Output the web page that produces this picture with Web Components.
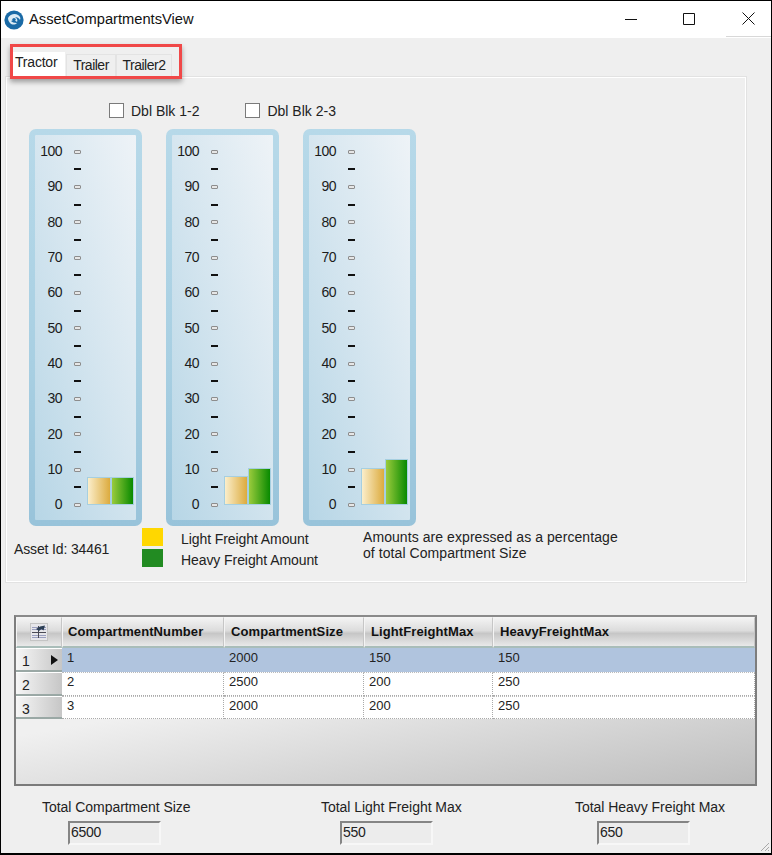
<!DOCTYPE html>
<html>
<head>
<meta charset="utf-8">
<title>AssetCompartmentsView</title>
<style>
    html, body { margin: 0; padding: 0; background: #efefef; }
    body { font-family: "Liberation Sans", Arial, sans-serif; font-size: 14px; color: #222; }
</style>
</head>
<body>
<asset-window>
    <title-bar slot="title">AssetCompartmentsView</title-bar>
    <tab-strip>
        <button-row slot="checks">
            <check-box style="margin-left:74px">Dbl Blk 1-2</check-box>
            <check-box style="margin-left:46px">Dbl Blk 2-3</check-box>
        </button-row>
        <tank-gauge slot="gauges" light="28" heavy="28"></tank-gauge>
        <tank-gauge slot="gauges" light="29" heavy="37"></tank-gauge>
        <tank-gauge slot="gauges" light="37" heavy="46"></tank-gauge>
        <freight-legend slot="footer"></freight-legend>
    </tab-strip>
    <compartment-grid></compartment-grid>
    <total-row>
        <total-field label="Total Compartment Size" value="6500" style="width:148px" offset="26"></total-field>
        <total-field label="Total Light Freight Max" value="550" style="width:142px;margin-left:131px" offset="19"></total-field>
        <total-field label="Total Heavy Freight Max" value="650" style="width:152px;margin-left:112px" offset="22"></total-field>
    </total-row>
</asset-window>

<script>
    window.customElements.define('asset-window',
    class AssetWindow extends HTMLElement {
        constructor() {
            super()
            this.attachShadow({mode: 'open'})
            this.shadowRoot.innerHTML = `
                <style>
                    :host {
                        display: flex;
                        flex-direction: column;
                        box-sizing: border-box;
                        width: 772px;
                        height: 855px;
                        border: 1px solid #000;
                        border-bottom-width: 2px;
                        background: #efefef;
                        position: relative;
                        overflow: hidden;
                    }
                    .grip { position: absolute; right: 1px; bottom: 1px; }
                </style>
                <slot name="title"></slot>
                <slot></slot>
                <svg class="grip" width="12" height="12" viewBox="0 0 12 12">
                    <path d="M11 3 3 11M11 7 7 11M11 10 10 11" stroke="#a8a8a8" stroke-width="1" fill="none"/>
                </svg>`
        }
    })

    window.customElements.define('title-bar',
    class TitleBar extends HTMLElement {
        constructor() {
            super()
            this.attachShadow({mode: 'open'})
            this.shadowRoot.innerHTML = `
                <style>
                    :host {
                        display: flex;
                        align-items: center;
                        height: 37px;
                        background: #fff;
                        flex: none;
                    }
                    .logo { margin-left: 3px; margin-right: 5px; }
                    .name { font-size: 14.7px; color: #111; flex: 1; margin-top: -1px; }
                    .btn { width: 46px; height: 37px; margin-left: 12px; display: flex; align-items: center; justify-content: center; margin-top: -2px; }
                    .btn:last-child { width: 45px; height: 36px; margin-left: 14px; margin-top: -1px; padding-bottom: 1px; box-sizing: border-box; border-bottom: 1px solid #d8d8d8; }
                </style>
                <svg class="logo" width="20" height="20" viewBox="0 0 20 20">
                    <circle cx="10" cy="10" r="9.6" fill="#1a6aa6"/>
                    <path d="M4 8c2-4 7-5 10-3 2 1 3 3 2 5-1-2-3-3-5-3 2 1 3 3 2 5-2-2-4-2-6-1 1 1 3 2 6 2-2 2-5 2-7 0-1-1-2-3-2-5z" fill="#dcebf5"/>
                    <circle cx="10" cy="9.6" r="1.7" fill="#1a6aa6"/>
                </svg>
                <div class="name"><slot></slot></div>
                <div class="btn"><svg width="12" height="12"><path d="M0 6.5h12" stroke="#111"/></svg></div>
                <div class="btn"><svg width="12" height="12"><path d="M.5.5h11v11H.5z" stroke="#111" fill="none"/></svg></div>
                <div class="btn"><svg width="13" height="13"><path d="M.5.5l12 12M12.5.5l-12 12" stroke="#111" fill="none"/></svg></div>`
        }
    })

    window.customElements.define('tab-strip',
    class TabStrip extends HTMLElement {
        constructor() {
            super()
            this.attachShadow({mode: 'open'})
            this.shadowRoot.innerHTML = `
                <style>
                    :host {
                        display: block;
                        margin: 12px 24px 0 4px;
                        position: relative;
                    }
                    .tabs { display: flex; align-items: flex-end; height: 26px; padding-left: 8px; }
                    .tab {
                        box-sizing: border-box;
                        height: 22px;
                        font-size: 14px;
                        letter-spacing: -.5px;
                        line-height: 21px;
                        text-align: center;
                        background: #efefef;
                        border: 1px solid #e3e3e3;
                        border-bottom: 0;
                    }
                    .tab.on {
                        height: 24px;
                        letter-spacing: -.2px;
                        line-height: 19px;
                        width: 52px;
                        text-align: left;
                        padding-left: 1px;
                        background: #fff;
                        border-color: #fff;
                        margin-right: 1px;
                    }
                    .panel {
                        box-sizing: border-box;
                        height: 507px;
                        border: 1px solid #e2e2e2;
                        box-shadow: inset 0 0 0 1px #fff;
                        padding: 26px 0 0 8px;
                    }
                    .gauges { display: flex; gap: 24px; margin: 1px 0 0 15px; }
                    .highlight {
                        position: absolute;
                        left: 5px;
                        top: -6px;
                        width: 172px;
                        height: 35px;
                        box-sizing: border-box;
                        border: 3px solid #f04848;
                        box-shadow: 0 3px 5px rgba(0,0,0,.35);
                    }
                </style>
                <div class="tabs">
                    <div class="tab on">Tractor</div>
                    <div class="tab" style="width:50px">Trailer</div>
                    <div class="tab" style="width:56px">Trailer2</div>
                </div>
                <div class="panel">
                    <slot name="checks"></slot>
                    <div class="gauges"><slot name="gauges"></slot></div>
                    <slot name="footer"></slot>
                </div>
                <div class="highlight"></div>`
        }
    })

    window.customElements.define('button-row',
    class ButtonRow extends HTMLElement {
        constructor() {
            super()
            this.attachShadow({mode: 'open'})
            this.shadowRoot.innerHTML = `
                <style>
                    :host { display: flex; height: 25px; margin-left: 21px; }
                </style>
                <slot></slot>`
        }
    })

    window.customElements.define('check-box',
    class CheckBox extends HTMLElement {
        constructor() {
            super()
            this.attachShadow({mode: 'open'})
            this.shadowRoot.innerHTML = `
                <style>
                    :host { display: flex; align-items: center; gap: 7px; height: 15px; }
                    .box {
                        box-sizing: border-box;
                        width: 15px;
                        height: 15px;
                        background: #fff;
                        border: 1px solid #7a7a7a;
                    }
                </style>
                <div class="box"></div><slot></slot>`
        }
    })

    window.customElements.define('tank-gauge',
    class TankGauge extends HTMLElement {
        constructor() {
            super()
            this.attachShadow({mode: 'open'})
            let rows = ''
            for (let i = 100; i >= 0; i -= 5) {
                const major = i % 10 === 0
                rows += `<div class="num">${major ? i : ''}</div><div class="tick"><i class="${major ? 'major' : 'minor'}"></i></div>`
            }
            this.shadowRoot.innerHTML = `
                <style>
                    :host {
                        display: block;
                        box-sizing: border-box;
                        width: 113px;
                        height: 397px;
                        border: 6px solid transparent;
                        border-radius: 7px;
                        background:
                            linear-gradient(73deg, #b7d6e6 0%, #d4e5ef 50%, #eef3f7 100%) padding-box,
                            linear-gradient(#b7d9e9, #a8cfe2 60%, #98c3da) border-box;
                    }
                    .inner { display: flex; align-items: flex-end; height: 100%; }
                    .scale {
                        display: grid;
                        grid-template-columns: 27px 12px;
                        grid-auto-rows: 17.68px;
                        column-gap: 12px;
                        margin: 0 0 6px 0;
                        width: 51px;
                        flex: none;
                    }
                    .num { letter-spacing: -.5px; line-height: 17.68px; text-align: right; color: #1c1c1c; white-space: nowrap; }
                    .tick { display: flex; align-items: center; }
                    .minor { display: block; width: 7px; height: 2px; background: #111; }
                    .major { display: block; box-sizing: border-box; width: 7px; height: 4px; background: #e6e6e6; border: 1px solid #8d8d8d; border-radius: 1px; }
                    .bars {
                        display: flex;
                        align-items: flex-end;
                        margin: 0 0 15px 1px;
                        height: 50px;
                    }
                    .bar { box-sizing: border-box; width: 23.5px; border: 1px solid #a6cfe0; }
                    .light { background: linear-gradient(90deg, #fbeecb, #dcab3e); }
                    .heavy { background: linear-gradient(90deg, #9acb3c, #088a00); }
                </style>
                <div class="inner">
                    <div class="scale">${rows}</div>
                    <div class="bars">
                        <div class="bar light" style="height:${this.getAttribute('light')}px"></div>
                        <div class="bar heavy" style="height:${this.getAttribute('heavy')}px"></div>
                    </div>
                </div>`
        }
    })

    window.customElements.define('freight-legend',
    class FreightLegend extends HTMLElement {
        constructor() {
            super()
            this.attachShadow({mode: 'open'})
            this.shadowRoot.innerHTML = `
                <style>
                    :host { display: flex; margin-top: 2px; margin-left: -1px; padding-left: 1px; }
                    .asset { width: 128px; flex: none; padding-top: 13px; line-height: 16px; letter-spacing: -.14px; }
                    .keys {
                        width: 221px;
                        flex: none;
                        display: grid;
                        grid-template-columns: 21px auto;
                        grid-auto-rows: 18px;
                        row-gap: 3px;
                        column-gap: 18px;
                        justify-content: start;
                    }
                    .swatch { background: #ffd700; }
                    .swatch.g { background: #228b22; }
                    .lbl { letter-spacing: -.08px; line-height: 18px; padding-top: 2px; white-space: nowrap; }
                    .note { letter-spacing: .07px; line-height: 16px; margin-top: 1px; }
                </style>
                <div class="asset">Asset Id: 34461</div>
                <div class="keys">
                    <div class="swatch"></div><div class="lbl">Light Freight Amount</div>
                    <div class="swatch g"></div><div class="lbl">Heavy Freight Amount</div>
                </div>
                <div class="note">Amounts are expressed as a percentage<br>of total Compartment Size</div>`
        }
    })

    window.customElements.define('compartment-grid',
    class CompartmentGrid extends HTMLElement {
        constructor() {
            super()
            this.attachShadow({mode: 'open'})
            const cols = ['CompartmentNumber', 'CompartmentSize', 'LightFreightMax', 'HeavyFreightMax']
            const data = [[1, 2000, 150, 150], [2, 2500, 200, 250], [3, 2000, 200, 250]]
            const head = cols.map((c, i) => `<div class="hd"${i === 0 ? ' style="padding-left:5px"' : ''}>${c}</div>`).join('')
            const body = data.map((r, i) => `
                <div class="rh">${i + 1}${i === 0 ? '<span class="arrow"></span>' : ''}</div>
                ${r.map(v => `<div class="cell${i === 0 ? ' sel' : ''}">${v}</div>`).join('')}`).join('')
            this.shadowRoot.innerHTML = `
                <style>
                    :host {
                        display: block;
                        box-sizing: border-box;
                        width: 743px;
                        height: 171px;
                        margin: 32px 0 0 13px;
                        border: 2px solid #7d7d7d;
                        border-top-color: #8a8a8a;
                        border-bottom-color: #7a7a7a;
                        background: linear-gradient(170deg, #f0f0f0 40%, #bdbdbd 100%);
                        flex: none;
                    }
                    .table {
                        display: grid;
                        grid-template-columns: 46px 162px 140px 129px 1fr;
                        grid-template-rows: 31px 24px 24px 23px;
                    }
                    .hd, .corner {
                        box-sizing: border-box;
                        background: linear-gradient(#f3f3f3, #dcdcdc 45%, #c6c6c6 55%, #e9e9e9);
                        border: 1px solid #f4f4f4;
                        border-right-color: #c6c6c6;
                        border-bottom: 2px solid #a9bdb9;
                        font: bold 13px/28px "Liberation Sans", Arial, sans-serif;
                        color: #111;
                        padding-left: 6px;
                        letter-spacing: .1px;
                    }
                    .corner { padding: 0; display: flex; align-items: center; justify-content: center; }
                    .rh {
                        box-sizing: border-box;
                        position: relative;
                        background: linear-gradient(90deg, #f6f6f6, #c6c6c6);
                        border-top: 1px solid #fff;
                        border-bottom: 2px solid #9aa8a5;
                        font-size: 14px;
                        line-height: 24px;
                        padding-left: 6px;
                        color: #222;
                    }
                    .arrow {
                        position: absolute;
                        right: 4px;
                        top: 6px;
                        border-left: 7px solid #111;
                        border-top: 5px solid transparent;
                        border-bottom: 5px solid transparent;
                    }
                    .cell {
                        box-sizing: border-box;
                        background: #fff;
                        border-right: 1px dotted #aaa;
                        border-bottom: 1px dotted #aaa;
                        border-top: 1px dotted #bbb;
                        font-size: 13px;
                        line-height: 18px;
                        padding-left: 5px;
                        color: #222;
                    }
                    .cell.sel { background: #b0c4de; border-color: #b0c4de; }
                </style>
                <div class="table">
                    <div class="corner">
                        <svg width="18" height="18" viewBox="0 0 18 18">
                            <rect x=".5" y=".5" width="17" height="17" fill="#e6e6ea" stroke="#c4c4c4"/>
                            <path d="M2 4.5h14M2 6.5h14M2 12.5h14M2 14.5h14" stroke="#9a9fc0" fill="none"/>
                            <path d="M2 9.5h14M8.5 3v12" stroke="#4a4a55" fill="none"/>
                            <path d="M6 6l4-2.5 5-1-1.500 5-2-1.500-2.500 2z" fill="#2c3f55"/>
                        </svg>
                    </div>
                    ${head}${body}
                </div>`
        }
    })

    window.customElements.define('total-row',
    class TotalRow extends HTMLElement {
        constructor() {
            super()
            this.attachShadow({mode: 'open'})
            this.shadowRoot.innerHTML = `
                <style>
                    :host { display: flex; margin: 13px 0 0 41px; }
                </style>
                <slot></slot>`
        }
    })

    window.customElements.define('total-field',
    class TotalField extends HTMLElement {
        constructor() {
            super()
            this.attachShadow({mode: 'open'})
            this.shadowRoot.innerHTML = `
                <style>
                    :host { display: block; flex: none; }
                    .label { letter-spacing: -.04px; line-height: 16px; white-space: nowrap; }
                    .box {
                        box-sizing: border-box;
                        width: 93px;
                        height: 24px;
                        margin: 6px 0 0 ${this.getAttribute('offset')}px;
                        border: 2px solid #f7f7f7;
                        border-top-color: #858585;
                        border-left-color: #858585;
                        background: #ececec;
                        letter-spacing: -.3px;
                        line-height: 19px;
                        padding-left: 1px;
                    }
                </style>
                <div class="label">${this.getAttribute('label')}</div>
                <div class="box">${this.getAttribute('value')}</div>`
        }
    })
</script>
</body>
</html>
